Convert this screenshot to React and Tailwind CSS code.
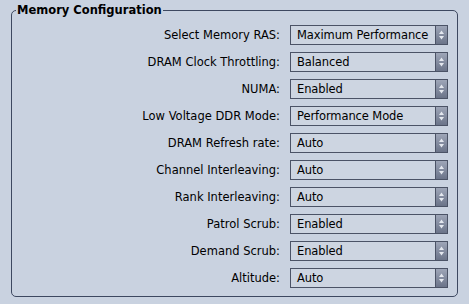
const rows = [
  ['Select Memory RAS:', 'Maximum Performance'],
  ['DRAM Clock Throttling:', 'Balanced'],
  ['NUMA:', 'Enabled'],
  ['Low Voltage DDR Mode:', 'Performance Mode'],
  ['DRAM Refresh rate:', 'Auto'],
  ['Channel Interleaving:', 'Auto'],
  ['Rank Interleaving:', 'Auto'],
  ['Patrol Scrub:', 'Enabled'],
  ['Demand Scrub:', 'Enabled'],
  ['Altitude:', 'Auto'],
]

function Spinner() {
  return (
    <svg width="7" height="12" viewBox="0 0 7 12">
      <path d="M3.5 1.5 L6 5 L1 5 Z" fill="#e4e8ef" />
      <path d="M3.5 10.5 L6 7 L1 7 Z" fill="#e4e8ef" />
    </svg>
  )
}

function SelectBox({ value }) {
  return (
    <div className="flex h-[20px] w-[158px] border border-[#4b5366] bg-[#cdd5e1]">
      <div className="flex-1 pl-[6px] leading-[18px] whitespace-nowrap overflow-hidden tracking-[-0.1px]">{value}</div>
      <div className="flex w-[12px] items-center justify-center border-l border-[#4b5366] bg-gradient-to-b from-[#9ea6b8] to-[#6b7489]">
        <Spinner />
      </div>
    </div>
  )
}

export default function App() {
  return (
    <div className="h-[304px] w-[469px] bg-[#c9d2e0] pt-[1px] pl-[11px] pr-[11px] font-['DejaVu_Sans',sans-serif] text-[11.5px] text-black">
      <fieldset className="h-[296px] rounded-[5px] border border-[#3d4860] pr-[9px] pl-0">
        <legend className="ml-[4px] px-[1px] text-[11.5px] font-bold leading-[18px]">Memory Configuration</legend>
        <div className="mt-[6px] grid grid-cols-[1fr_158px] gap-x-[10px] gap-y-[7px]">
          {rows.map(([label, value]) => (
            <div key={label} className="contents">
              <div className="text-right leading-[20px] whitespace-nowrap">{label}</div>
              <SelectBox value={value} />
            </div>
          ))}
        </div>
      </fieldset>
    </div>
  )
}
